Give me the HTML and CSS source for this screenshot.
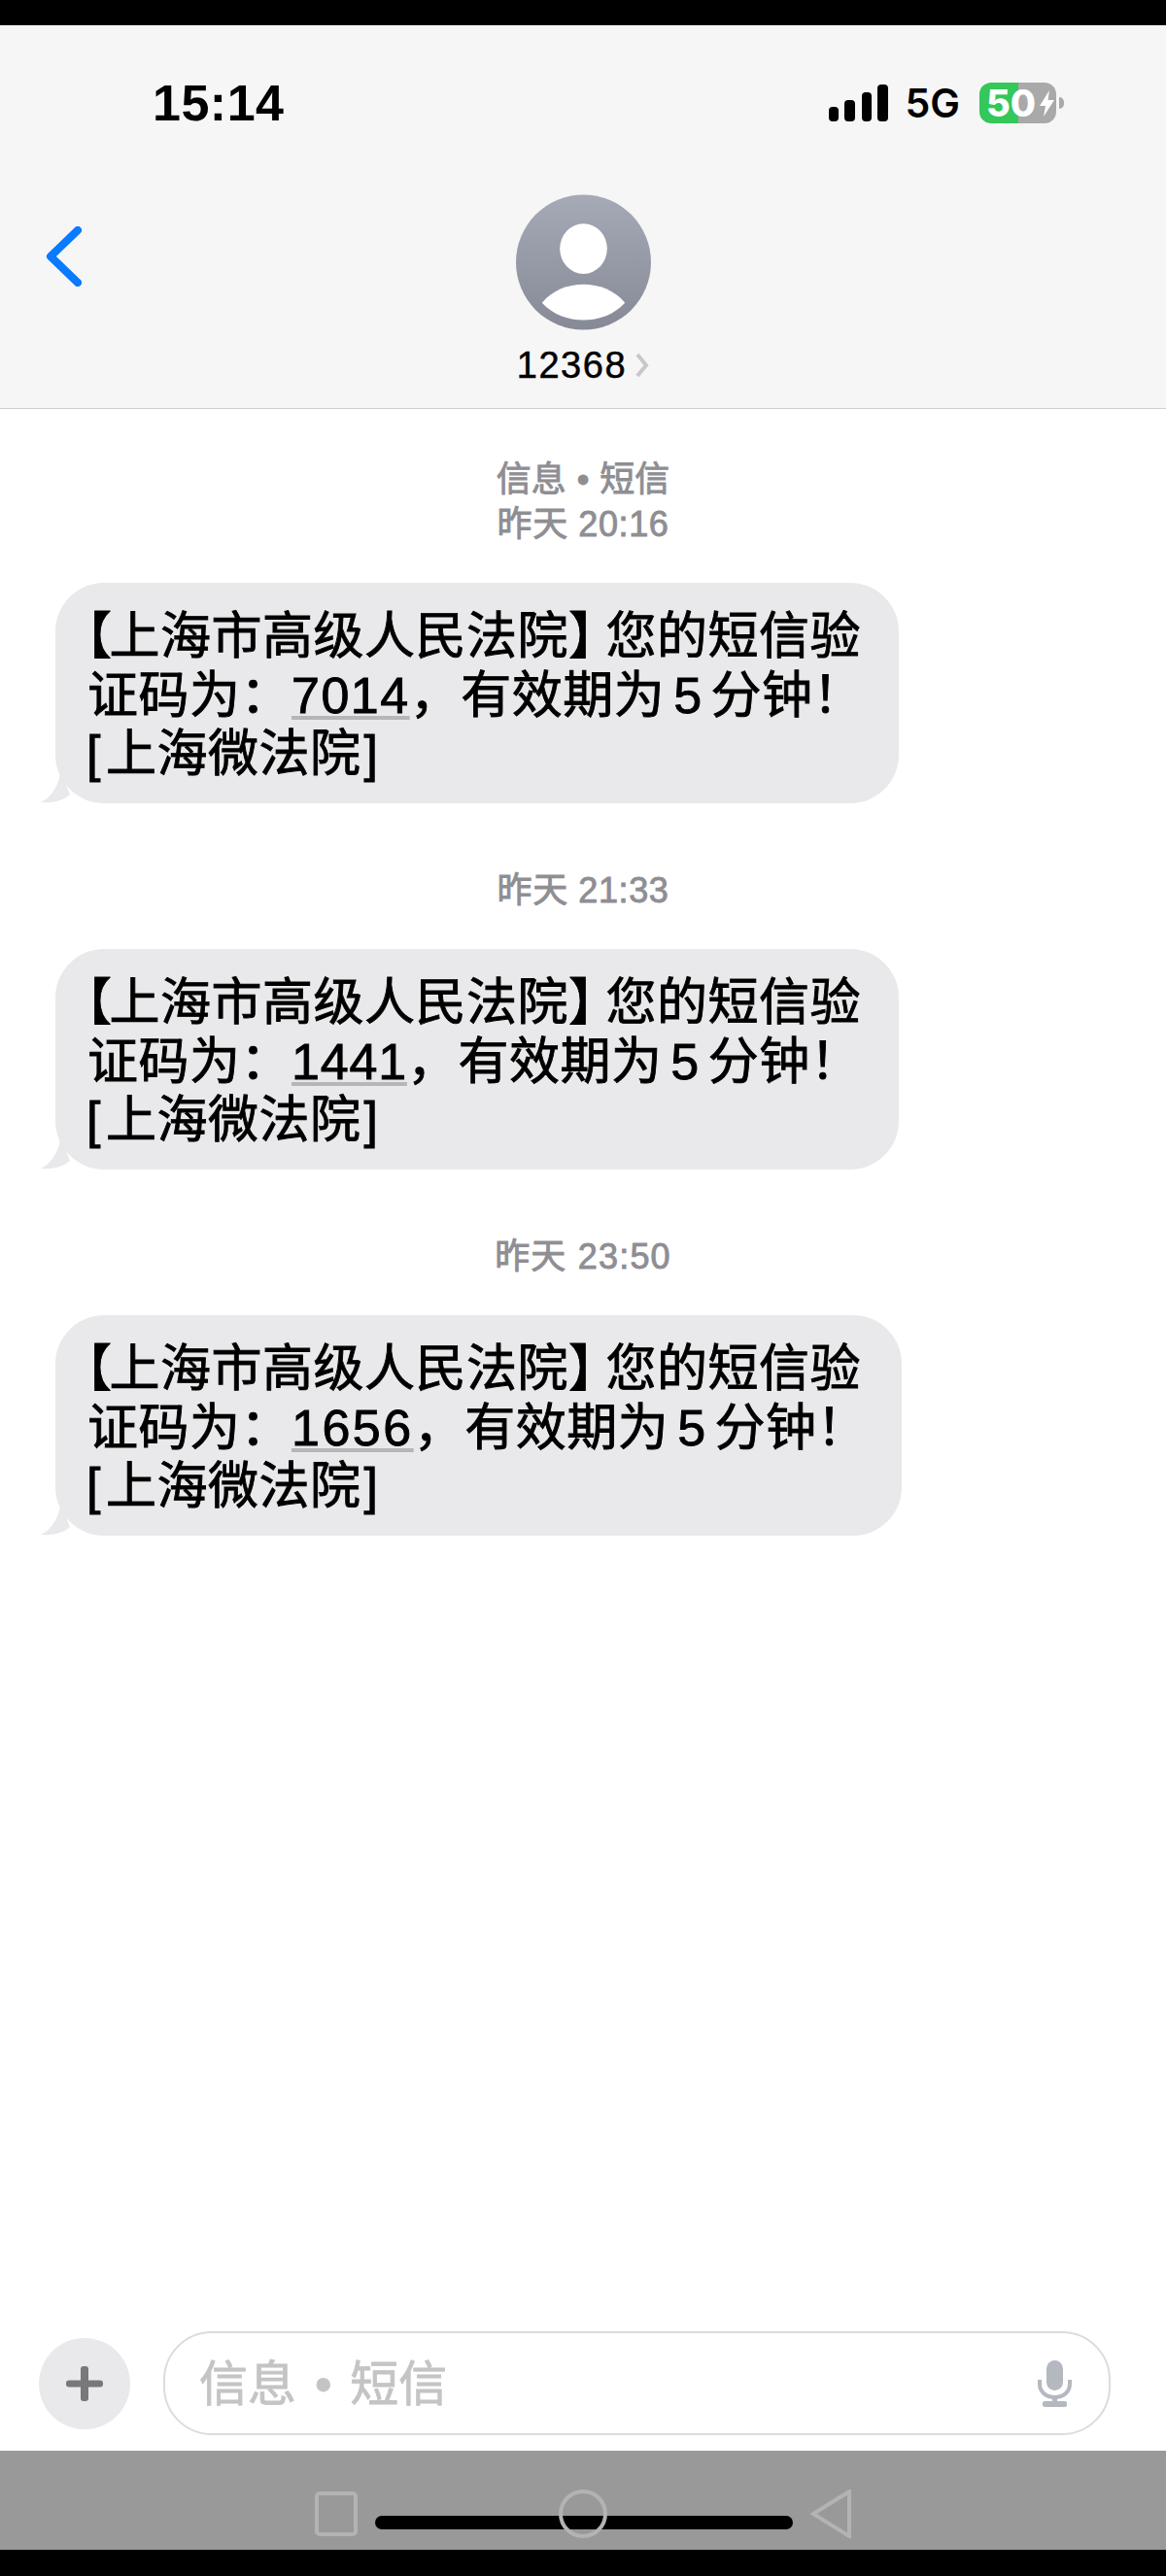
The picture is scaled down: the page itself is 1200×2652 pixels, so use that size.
FILE: index.html
```html
<!DOCTYPE html>
<html lang="zh-CN">
<head>
  <meta charset="UTF-8" />
  <meta name="viewport" content="width=device-width, initial-scale=1.0"/>
  <title>12368</title>
  <link rel="stylesheet" href="styles.css">
</head>
<body>
  <div class="screen">
    <div class="black-top"></div>

    <header class="top-area">
      <div class="status-bar">
        <span class="clock">15:14</span>
        <div class="status-icons">
          <svg class="signal" width="61" height="38" viewBox="0 0 61 38">
            <rect x="0" y="23" width="10" height="15" rx="4"/>
            <rect x="16" y="16" width="11" height="22" rx="4"/>
            <rect x="34" y="8" width="10" height="30" rx="4"/>
            <rect x="50" y="0" width="11" height="38" rx="4"/>
          </svg>
          <span class="network">5G</span>
          <div class="battery">
            <span class="battery-level">50</span>
            <svg class="bolt" width="15" height="27" viewBox="0 0 15 27">
              <path d="M10 0 L0 16 L6 16 L4 27 L15 10 L8.5 10 Z"/>
            </svg>
          </div>
          <span class="battery-cap"></span>
        </div>
      </div>

      <div class="contact">
        <!-- Back arrow -->
        <svg class="back" width="37" height="62" viewBox="0 0 37 62">
          <path d="M33 4 L5 31 L33 58"/>
        </svg>
        <svg class="avatar" width="139" height="140" viewBox="0 0 140 140">
          <defs>
            <linearGradient id="avatarFill" x1="0" y1="0" x2="0" y2="1">
              <stop offset="0" stop-color="#a6aab6"/>
              <stop offset="1" stop-color="#868a96"/>
            </linearGradient>
          </defs>
          <circle cx="70" cy="70" r="70" fill="url(#avatarFill)"/>
          <ellipse cx="70" cy="56" rx="24.5" ry="26" fill="#fff"/>
          <path fill="#fff" d="M27 112 C38 99 54 93 70 93 C86 93 102 99 113 112 C102 124 86 130 70 130 C54 130 38 124 27 112 Z"/>
        </svg>
        <div class="contact-name">
          <span>12368</span>
          <svg width="15" height="26" viewBox="0 0 15 26">
            <path d="M3 2 L12 13 L3 24"/>
          </svg>
        </div>
      </div>
    </header>

    <main class="thread">
      <div class="stamp stamp-first">
        <div class="stamp-service">信息 • 短信</div>
        <div>昨天 20:16</div>
      </div>
      <div class="bubble">
        <svg class="tail" width="30" height="34" viewBox="0 0 30 34">
          <path d="M20 0 C20 14 10 29 0 33 C12 34 24 31 30 25 Z"/>
        </svg>
        <p class="line"><span class="bracket-l">【</span>上海市高级人民法院<span class="bracket-r">】</span>您的短信验</p>
        <p class="line line-code">证码为：<span class="code">7014</span>，有效期为 5 分钟！</p>
        <p class="line"><span class="square-l">[</span>上海微法院<span class="square-r">]</span></p>
      </div>

      <div class="stamp">昨天 21:33</div>
      <div class="bubble">
        <svg class="tail" width="30" height="34" viewBox="0 0 30 34">
          <path d="M20 0 C20 14 10 29 0 33 C12 34 24 31 30 25 Z"/>
        </svg>
        <p class="line"><span class="bracket-l">【</span>上海市高级人民法院<span class="bracket-r">】</span>您的短信验</p>
        <p class="line line-code">证码为：<span class="code code-narrow">1441</span>，有效期为 5 分钟！</p>
        <p class="line"><span class="square-l">[</span>上海微法院<span class="square-r">]</span></p>
      </div>

      <div class="stamp stamp-wide">昨天 23:50</div>
      <div class="bubble bubble-wide">
        <svg class="tail" width="30" height="34" viewBox="0 0 30 34">
          <path d="M20 0 C20 14 10 29 0 33 C12 34 24 31 30 25 Z"/>
        </svg>
        <p class="line"><span class="bracket-l">【</span>上海市高级人民法院<span class="bracket-r">】</span>您的短信验</p>
        <p class="line line-code">证码为：<span class="code code-wide">1656</span>，有效期为 5 分钟！</p>
        <p class="line"><span class="square-l">[</span>上海微法院<span class="square-r">]</span></p>
      </div>
    </main>

    <div class="composer">
      <div class="plus-btn">
        <svg width="38" height="36" viewBox="0 0 38 36">
          <rect x="15" y="0" width="8" height="36" rx="3"/>
          <rect x="0" y="14.500" width="38" height="7" rx="3"/>
        </svg>
      </div>
      <div class="message-input">
        <span class="placeholder">信息 • 短信</span>
        <svg class="mic" width="35" height="48" viewBox="0 0 35 48">
          <rect x="9" y="0" width="17" height="31" rx="8.500" fill="#b4b8bf"/>
          <path class="mic-arc" d="M2 20 V24 C2 33 9 38 17.500 38 C26 38 33 33 33 24 V20"/>
          <rect x="15" y="37" width="5" height="7" fill="#b4b8bf"/>
          <rect x="5" y="42" width="25" height="6" rx="2" fill="#b4b8bf"/>
        </svg>
      </div>
    </div>

    <nav class="nav-bar">
      <svg class="nav-square" width="44" height="46" viewBox="0 0 44 46">
        <rect x="2" y="2" width="40" height="42" rx="3"/>
      </svg>
      <div class="home-bar">
        <svg class="nav-circle" width="50" height="50" viewBox="0 0 50 50">
          <circle cx="25" cy="25" r="23"/>
        </svg>
      </div>
      <svg class="nav-triangle" width="43" height="50" viewBox="0 0 43 50">
        <path d="M40 2 L3 25 L40 48 Z"/>
      </svg>
    </nav>

    <div class="black-bottom"></div>
  </div>
</body>
</html>
```

FILE: styles.css
```css
* {
  box-sizing: border-box;
  margin: 0;
  padding: 0;
}
body {
  background: #fff;
  font-family: "Liberation Sans", "Noto Sans CJK SC", sans-serif;
  color: #000;
}
.screen {
  display: flex;
  flex-direction: column;
  width: 1200px;
  height: 2652px;
  overflow: hidden;
}
.black-top {
  height: 26px;
  background: #000;
}
.black-bottom {
  height: 27px;
  background: #000;
}

/* Header */
.top-area {
  height: 395px;
  background: #f6f6f6;
  border-bottom: 1px solid #cfcfcf;
  padding-top: 57px;
}
.status-bar {
  display: flex;
  justify-content: space-between;
  align-items: center;
  height: 46px;
  padding: 0 105px 0 157px;
}
.clock {
  font-size: 52px;
  font-weight: bold;
  line-height: 46px;
  letter-spacing: 0.5px;
}
.status-icons {
  display: flex;
  align-items: center;
}
.signal {
  fill: #000;
  margin-right: 18px;
}
.network {
  font-family: Inter, sans-serif;
  font-size: 41px;
  font-weight: 600;
  line-height: 46px;
  margin-right: 20px;
}
.battery {
  display: flex;
  align-items: center;
  width: 79px;
  height: 42px;
  padding-left: 7px;
  border-radius: 12px;
  background: linear-gradient(90deg, #34c759 51%, #a9a9a9 51%);
}
.battery-level {
  font-family: Inter, sans-serif;
  font-size: 38px;
  font-weight: 800;
  line-height: 42px;
  color: #fff;
}
.bolt {
  fill: #fff;
  margin-left: 4px;
}
.battery-cap {
  width: 5px;
  height: 12px;
  margin-left: 3px;
  border-radius: 0 6px 6px 0;
  background: #a9a9a9;
}
.contact {
  position: relative;
  display: flex;
  flex-direction: column;
  align-items: center;
  padding-top: 71px;
}
.back {
  position: absolute;
  left: 47px;
  top: 104px;
  fill: none;
  stroke: #0a7aff;
  stroke-width: 8;
  stroke-linecap: round;
  stroke-linejoin: round;
}
.contact-name {
  display: flex;
  align-items: center;
  gap: 8px;
  margin-top: 14px;
  font-size: 38px;
  line-height: 44px;
  letter-spacing: 1.6px;
  -webkit-text-stroke: 0.5px #000;
}
.contact-name svg {
  fill: none;
  stroke: #c7c7cc;
  stroke-width: 4;
}

/* Messages */
.thread {
  flex: 1;
  padding: 50px 0 0 57px;
}
.stamp {
  margin: 67px 57px 37px 0;
  text-align: center;
  font-size: 36px;
  line-height: 46px;
  letter-spacing: 0.6px;
  color: #8e8e93;
  -webkit-text-stroke: 0.9px #8e8e93;
}
.stamp-first {
  margin-top: 0;
}
.stamp-service {
  letter-spacing: 0;
  word-spacing: 1px;
}
.stamp-wide {
  letter-spacing: 1.2px;
}
.bubble {
  position: relative;
  width: 868px;
  height: 227px;
  padding: 25px 0 0 32px;
  border-radius: 50px;
  background: #e9e9eb;
}
.bubble-wide {
  width: 871px;
}
.tail {
  position: absolute;
  left: -15px;
  bottom: 0;
  fill: #e9e9eb;
}
.line {
  font-size: 52px;
  line-height: 60.5px;
  letter-spacing: 0.5px;
  white-space: nowrap;
  -webkit-text-stroke: 0.9px #000;
}
.line-code {
  padding-left: 1px;
  word-spacing: -6px;
}
.bracket-l,
.bracket-r {
  font-feature-settings: "halt";
}
.bracket-l {
  margin-right: -3px;
}
.bracket-r {
  margin-right: 12px;
}
.square-l {
  margin-right: 5px;
}
.square-r {
  margin-left: 3px;
}
.code {
  letter-spacing: 1.5px;
  text-decoration: underline;
  text-decoration-color: #b5b5ba;
  text-decoration-thickness: 4px;
  text-underline-offset: 3px;
}
.code-narrow {
  letter-spacing: 0.8px;
}
.code-wide {
  letter-spacing: 2.5px;
}

/* Input row */
.composer {
  display: flex;
  align-items: center;
  gap: 34px;
  height: 107px;
  margin-bottom: 16px;
  padding: 0 57px 0 40px;
}
.plus-btn {
  display: flex;
  flex: none;
  justify-content: center;
  align-items: center;
  width: 94px;
  height: 94px;
  border-radius: 50%;
  background: #e9e9eb;
  fill: #77777c;
}
.message-input {
  display: flex;
  flex: 1;
  justify-content: space-between;
  align-items: center;
  height: 107px;
  padding: 0 38px 0 35px;
  border: 2px solid #dcdcdc;
  border-radius: 50px;
}
.placeholder {
  padding-top: 2px;
  font-size: 50px;
  line-height: 50px;
  word-spacing: 5px;
  color: #c4c4c6;
  -webkit-text-stroke: 0.8px #c4c4c6;
}
.mic-arc {
  fill: none;
  stroke: #b4b8bf;
  stroke-width: 4;
}

/* Android nav strip */
.nav-bar {
  display: flex;
  justify-content: center;
  align-items: center;
  gap: 18px;
  height: 102px;
  background: #999;
  padding-top: 28px;
}
.nav-square,
.nav-circle,
.nav-triangle {
  fill: none;
  stroke: #b3b3b3;
  stroke-width: 4;
}
.home-bar {
  position: relative;
  width: 430px;
  height: 14px;
  margin-top: 18px;
  border-radius: 7px;
  background: #000;
}
.nav-circle {
  position: absolute;
  left: 189px;
  top: -27px;
}
```
